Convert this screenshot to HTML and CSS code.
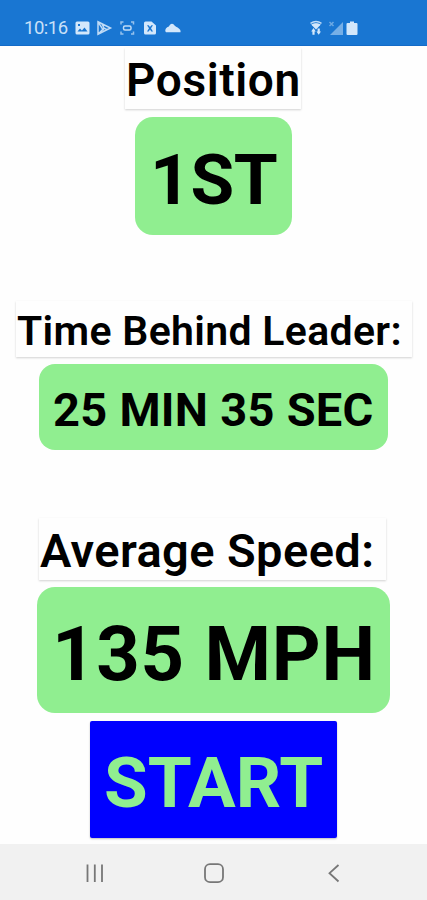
FILE: index.html
```
<!DOCTYPE html>
<html lang="en">
<head>
<meta charset="utf-8">
<title>Race Status</title>
<link rel="stylesheet" href="styles.css">
</head>
<body>
<header class="status">
  <span class="clock">10:16</span>
  <svg class="notices" width="110" height="18" viewBox="0 0 110 18">
    <path fill-rule="evenodd" d="M3 2.500h11q1.500 0 1.500 1.500v10q0 1.500-1.500 1.500H3q-1.500 0-1.500-1.500V4q0-1.500 1.500-1.500zM3.500 12.500h10l-3-4-2.600 3-1.900-1.900zM4 5v2h2V5z"/>
    <path class="line" d="M24 2.800v12.400l12.500-6.200zM24 2.800l5.500 8.500M24 15.200l6-6 3.500 1.800M28 5l2 4"/>
    <path class="line dim" d="M47 5.500V3h2.500M57 3h2.500v2.500M47 12.500V15h2.500M57 15h2.500v-2.500"/>
    <rect class="line" x="49.500" y="7" width="7.500" height="4" rx="1.500"/>
    <path fill-rule="evenodd" d="M71.500 2.500h6l4.500 4v7.500q0 1.500-1.500 1.500h-9Q70 15.500 70 14V4q0-1.500 1.500-1.500zM73 6.200l2 3-2 3.300h1.700l1.300-2 1.300 2H79l-2-3.300 2-3h-1.600L76 8.100l-1.300-1.900z"/>
    <path d="M92 13.300q-2-2.300 1.200-5.100 2-.4 2.600-2.200 2.700-2.700 5 .8 1.200 1.400 2.800 1.600 3.600 2.200 2.900 4.900z"/>
  </svg>
  <svg class="signals" width="52" height="18" viewBox="0 0 52 18">
    <path class="line" d="M1.500 4.300q5.500-3.600 11 0M3.500 6.500q3.500-2.400 7 0"/>
    <path d="M2.200 5.500q4.800-2.500 9.600 0L7 10.500zM4.500 9l2.300 3.500H5.600v3.200H3.400v-3.200H2.200zM9.700 15.800l-2.300-3.300h1.200V9.500h2.200v3H12z"/>
    <path class="faint" d="M34 3v13H21z"/>
    <path class="line faint" d="M20.500 3l4 4M24.500 3l-4 4"/>
    <path d="M41 2.500h4V4h2.500q1 0 1 1v10q0 1-1 1h-9q-1 0-1-1V5q0-1 1-1H41z"/>
  </svg>
</header>
<main class="screen">
  <h2 class="label position-label"><span>Position</span></h2>
  <div class="value position"><span>1ST</span></div>
  <h2 class="label gap-label"><span>Time Behind Leader:</span></h2>
  <div class="value gap"><span>25 MIN 35 SEC</span></div>
  <h2 class="label speed-label"><span>Average Speed:</span></h2>
  <div class="value speed"><span>135 MPH</span></div>
  <button class="start" type="button"><span>START</span></button>
</main>
<nav class="navbar">
  <svg width="24" height="24" viewBox="0 0 24 24"><path d="M4.500 3.500v17.500M11.800 3.500v17.500M19 3.500v17.500"/></svg>
  <svg width="24" height="24" viewBox="0 0 24 24"><rect x="3" y="3.200" width="18" height="18" rx="5"/></svg>
  <svg width="24" height="24" viewBox="0 0 24 24"><path d="M17.500 4L8.500 12.200l9 8.300"/></svg>
</nav>
</body>
</html>
```
FILE: styles.css
```
* { box-sizing: border-box; }
body {
  margin: 0;
  width: 427px;
  height: 900px;
  display: flex;
  flex-direction: column;
  background: #fefefe;
  font-family: Roboto, "Liberation Sans", sans-serif;
  overflow: hidden;
}
.status {
  height: 46px;
  flex: none;
  display: flex;
  align-items: center;
  padding: 11px 0 0 24px;
  background: #1976d2;
  border-bottom: 1px solid #146bc8;
  color: #c9e0f8;
}
.clock { width: 50px; font-size: 18.5px; line-height: 20px; letter-spacing: -0.5px; }
.status svg { fill: #d3e7fb; }
.status .line { fill: none; stroke: #c0dbf6; stroke-width: 1.5; }
.status .dim { opacity: .75; }
.status .faint { opacity: .5; }
.signals { margin-left: 125px; }
.screen {
  flex: 1;
  display: flex;
  flex-direction: column;
  align-items: flex-start;
}
.label, .value, .start {
  flex: none;
  display: flex;
  align-items: center;
  margin: 0;
  font-weight: 700;
  line-height: 1;
  white-space: pre;
  color: #000;
}
.label {
  background: #fefefe;
  font-weight: 600;
  box-shadow: 0 1px 2px rgba(0, 0, 0, .18);
}
.value { background: #90ee90; }
.position-label { width: 176px; height: 61px; margin: 2px 0 0 125px; padding: 3px 0 0 1px; font-size: 46px; letter-spacing: .6px; }
.position { width: 157px; height: 118px; margin: 8px 0 0 135px; padding: 7px 0 0 15px; border-radius: 18px; font-size: 71px; letter-spacing: -.3px; }
.gap-label { width: 396px; height: 56px; margin: 66px 0 0 16px; padding: 5px 0 0 1px; font-size: 41px; letter-spacing: .32px; }
.gap { width: 349px; height: 86px; margin: 7px 0 0 39px; padding: 4px 0 0 14px; border-radius: 16px; font-size: 47px; letter-spacing: .27px; }
.speed-label { width: 347px; height: 62px; margin: 68px 0 0 39px; padding: 2px 0 0 1px; font-size: 47px; letter-spacing: .4px; }
.speed { width: 353px; height: 126px; margin: 7px 0 0 37px; padding: 8px 0 0 15px; border-radius: 18px; font-size: 76px; letter-spacing: .7px; }
.start {
  width: 247px;
  height: 117px;
  margin: 8px 0 0 90px;
  padding: 6px 0 0 14px;
  border: 0;
  border-radius: 2px;
  background: #00f;
  color: #90ee90;
  font-family: inherit;
  font-size: 71px;
  box-shadow: 0 1px 2px rgba(0, 0, 0, .25);
}
.navbar {
  height: 56px;
  flex: none;
  display: flex;
  justify-content: space-between;
  align-items: center;
  padding: 1px 82px 0 83px;
  background: #f1f1f1;
}
.navbar svg { fill: none; stroke: #777; stroke-width: 1.8; }
```
